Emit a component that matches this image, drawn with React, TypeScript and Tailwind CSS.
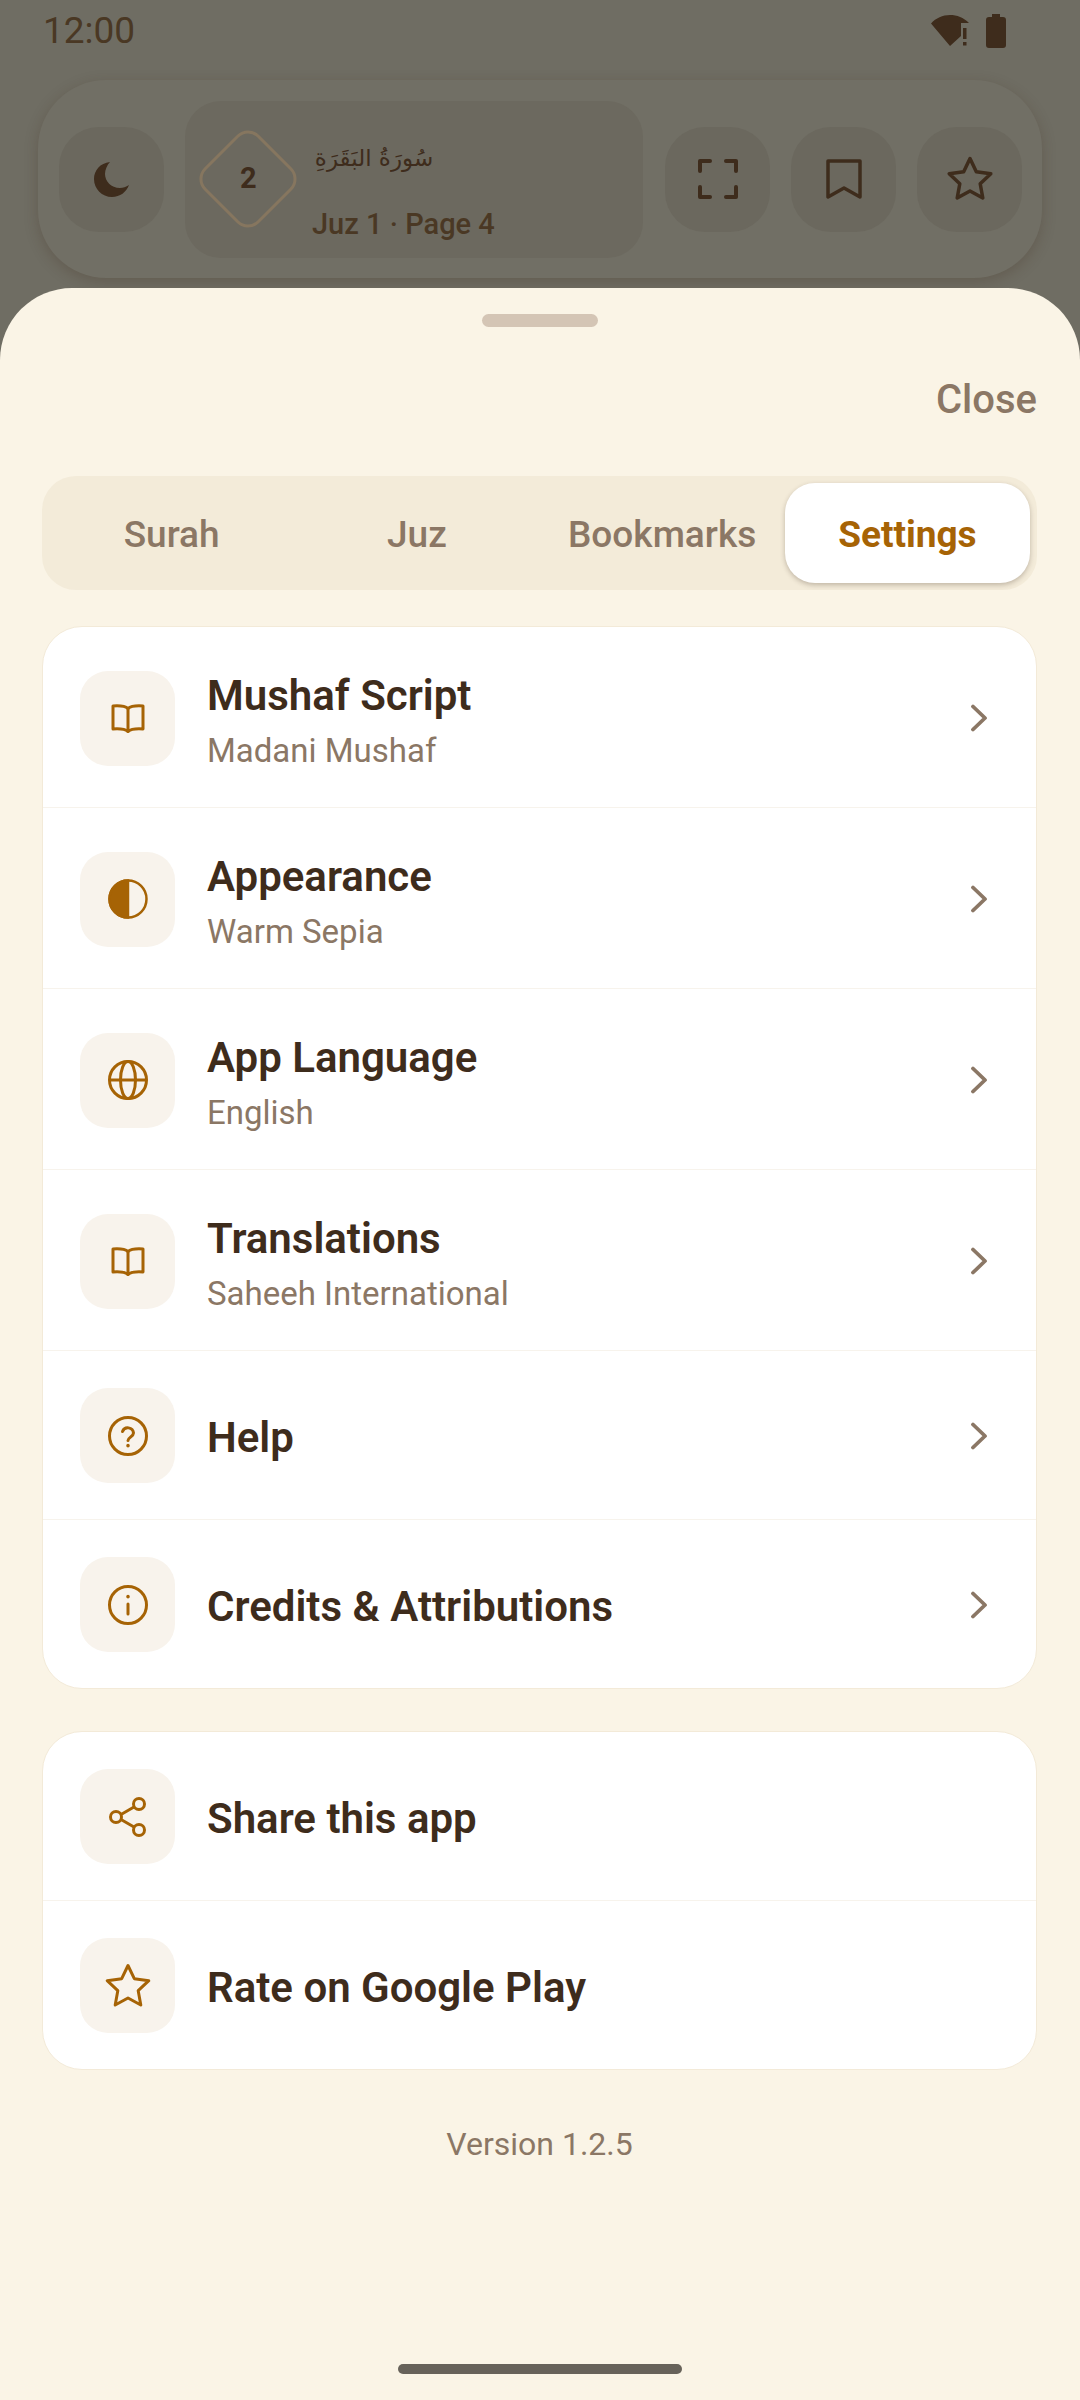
import type { ReactNode } from "react";

const BROWN = "#a66305";

function BookIcon() {
  return (
    <svg width="36" height="36" viewBox="0 0 36 36" fill="none" stroke={BROWN} strokeWidth="3" strokeLinejoin="round" strokeLinecap="round">
      <path d="M18 8.5C15 6 10 5.500 3 6v23c7-.5 12 0 15 2.500C21 29 26 28.500 33 29V6c-7-.5-12 0-15 2.500Z" />
      <path d="M18 8.500V31" />
    </svg>
  );
}

function ContrastIcon() {
  return (
    <svg width="44" height="44" viewBox="0 0 44 44" fill="none" stroke={BROWN} strokeWidth="2.500">
      <circle cx="22" cy="22" r="18.500" />
      <path d="M22 3.500a18.500 18.500 0 0 0 0 37Z" fill={BROWN} />
    </svg>
  );
}

function GlobeIcon() {
  return (
    <svg width="44" height="44" viewBox="0 0 44 44" fill="none" stroke={BROWN} strokeWidth="3">
      <circle cx="22" cy="22" r="18.500" />
      <ellipse cx="22" cy="22" rx="7.500" ry="18.500" />
      <path d="M3.500 22h37" />
    </svg>
  );
}

function HelpIcon() {
  return (
    <svg width="44" height="44" viewBox="0 0 44 44" fill="none" stroke={BROWN} strokeWidth="3" strokeLinecap="round">
      <circle cx="22" cy="22" r="18.500" />
      <path d="M16.500 17.500a5.700 5.700 0 0 1 11 1.500c0 3.700-5.500 4.500-5.500 7.500" />
      <path d="M22 31.500v.2" strokeWidth="3.500" />
    </svg>
  );
}

function InfoIcon() {
  return (
    <svg width="44" height="44" viewBox="0 0 44 44" fill="none" stroke={BROWN} strokeWidth="3" strokeLinecap="round">
      <circle cx="22" cy="22" r="18.500" />
      <path d="M22 21v10" />
      <path d="M22 13.500v.2" strokeWidth="3.500" />
    </svg>
  );
}

function ShareIcon() {
  return (
    <svg width="44" height="44" viewBox="0 0 44 44" fill="none" stroke={BROWN} strokeWidth="3">
      <circle cx="33" cy="9" r="5.500" />
      <circle cx="10" cy="22" r="5.500" />
      <circle cx="33" cy="35" r="5.500" />
      <path d="M15 19.500 28 12M15 24.500 28 32" />
    </svg>
  );
}

function StarIcon({ color, stroke }: { color: string; stroke: number }) {
  return (
    <svg width="48" height="48" viewBox="0 0 48 48" fill="none" stroke={color} strokeWidth={stroke} strokeLinejoin="round">
      <path d="m24 3.500 6.300 13.200 14.500 2-10.600 10 2.600 14.300L24 36l-12.800 7 2.600-14.300-10.600-10 14.500-2Z" />
    </svg>
  );
}

function Chevron() {
  return (
    <svg width="18" height="28" viewBox="0 0 18 28" fill="none" stroke="#8b7765" strokeWidth="3.800" strokeLinecap="round" strokeLinejoin="round">
      <path d="m3 2.500 12 11.500L3 25.500" />
    </svg>
  );
}

function ToolbarButton({ children }: { children: ReactNode }) {
  return (
    <div className="flex h-[105px] w-[105px] shrink-0 items-center justify-center rounded-[40px] bg-[#6b685e]">
      {children}
    </div>
  );
}

function Row({ icon, title, subtitle, chevron = true }: { icon: ReactNode; title: string; subtitle?: string; chevron?: boolean }) {
  return (
    <div className={`flex items-center border-b border-[#f7f3ec] pl-[37px] pr-[48px] last:border-b-0 ${subtitle ? "pt-[38px] pb-[36px]" : "pt-[37px] pb-[36px]"}`}>
      <div className="flex h-[95px] w-[95px] shrink-0 items-center justify-center rounded-[28px] bg-[#f8f3ec]">
        {icon}
      </div>
      <div className="ml-[32px] flex flex-1 flex-col">
        <div className={`text-[42px] leading-[62px] font-semibold text-[#3e2c1c] ${subtitle ? "" : "pt-[5px]"}`}>{title}</div>
        {subtitle && <div className="mt-[4px] text-[33px] leading-[40px] text-[#8b7765]">{subtitle}</div>}
      </div>
      {chevron && <Chevron />}
    </div>
  );
}

export default function App() {
  const tabs = ["Surah", "Juz", "Bookmarks"];

  return (
    <div className="flex h-[2400px] w-[1080px] flex-col overflow-hidden bg-[#6f6d63] font-['Roboto',sans-serif]">
      {/* status bar */}
      <div className="flex h-[62px] shrink-0 items-center justify-between pl-[43px] pr-[74px]">
        <span className="text-[37px] leading-[62px] text-[#4a3824]">12:00</span>
        <div className="flex items-center gap-[17px]">
          <svg width="38" height="34" viewBox="0 0 38 34" fill="#3e2c1c">
            <path d="M19 32 0 9.500C5 4 11.500 1 19 1c7 0 13.500 2.500 19 8h-8v13h0Z" />
            <path d="M32 14h3.500v11H32ZM32 28h3.500v3.500H32Z" />
          </svg>
          <svg width="20" height="34" viewBox="0 0 20 34" fill="#3e2c1c">
            <path d="M6 0h8v3h3a3 3 0 0 1 3 3v25a3 3 0 0 1-3 3H3a3 3 0 0 1-3-3V6a3 3 0 0 1 3-3h3Z" />
          </svg>
        </div>
      </div>

      {/* reader toolbar, dimmed behind the sheet */}
      <div className="mx-[38px] mt-[18px] flex h-[198px] shrink-0 items-center rounded-[68px] bg-[#716f65] pl-[21px] pr-[20px] shadow-[0_4px_14px_rgba(62,44,28,0.25)]">
        <ToolbarButton>
          <svg width="40" height="40" viewBox="0 0 40 40" fill="#3e2c1c">
            <path d="M18 3C8 4 2 11.500 2 20c0 10 8 18 18 18 8 0 14.500-5 17-12-3 2-6 3-9 3-9 0-15-7-15-14 0-4 2-9 5-12Z" />
          </svg>
        </ToolbarButton>

        <div className="ml-[21px] flex h-[157px] w-[458px] items-center rounded-[36px] bg-[#6c695f] pl-[14px]">
          <div className="flex h-[98px] w-[98px] shrink-0 items-center justify-center">
            <div className="flex h-[78px] w-[78px] shrink-0 rotate-45 items-center justify-center rounded-[16px] border-[3px] border-[#86765f]">
              <span className="-rotate-45 text-[29px] font-bold text-[#3e2c1c]">2</span>
            </div>
          </div>
          <div className="ml-[15px] flex flex-col pt-[13px]">
            <div dir="rtl" className="w-[124px] whitespace-nowrap text-center font-['DejaVu_Sans',serif] text-[23px] leading-[56px] text-[#3e2c1c]">
              سُورَةُ البَقَرَةِ
            </div>
            <div className="mt-[20px] text-[29px] leading-[36px] font-medium text-[#4a3824]">Juz 1 · Page 4</div>
          </div>
        </div>

        <div className="ml-[22px] flex gap-[21px]">
          <ToolbarButton>
            <svg width="40" height="40" viewBox="0 0 40 40" fill="none" stroke="#3e2c1c" strokeWidth="4" strokeLinejoin="round" strokeLinecap="round">
              <path d="M12 2H2v10M28 2h10v10M2 28v10h10M38 28v10H28" />
            </svg>
          </ToolbarButton>
          <ToolbarButton>
            <svg width="36" height="40" viewBox="0 0 36 40" fill="none" stroke="#3e2c1c" strokeWidth="3.500" strokeLinejoin="round">
              <path d="M2 2h32v36L18 29 2 38Z" />
            </svg>
          </ToolbarButton>
          <ToolbarButton>
            <StarIcon color="#3e2c1c" stroke={3.500} />
          </ToolbarButton>
        </div>
      </div>

      {/* bottom sheet */}
      <div className="mt-[10px] flex flex-1 flex-col rounded-t-[72px] bg-[#faf4e6] pl-[42px] pr-[43px]">
        <div className="mt-[26px] h-[13px] w-[116px] self-center rounded-full bg-[#d4c5b5]" />
        <div className="mt-[51px] self-end text-[40px] leading-[44px] font-medium text-[#8b7765]">Close</div>

        <div className="mt-[54px] grid h-[114px] grid-cols-4 items-center rounded-[34px] bg-[#f3ebd9] p-[7px]">
          {tabs.map((tab) => (
            <div key={tab} className="pt-[3px] text-center text-[37px] font-medium text-[#8b7765]">
              {tab}
            </div>
          ))}
          <div className="flex h-[100px] items-center justify-center rounded-[30px] bg-white pt-[3px] text-[37px] font-bold text-[#a66305] shadow-[0_2px_5px_rgba(62,44,28,0.28)]">
            Settings
          </div>
        </div>

        <div className="mt-[36px] overflow-hidden rounded-[40px] border border-[#f3ead8] bg-white">
          <Row icon={<BookIcon />} title="Mushaf Script" subtitle="Madani Mushaf" />
          <Row icon={<ContrastIcon />} title="Appearance" subtitle="Warm Sepia" />
          <Row icon={<GlobeIcon />} title="App Language" subtitle="English" />
          <Row icon={<BookIcon />} title="Translations" subtitle="Saheeh International" />
          <Row icon={<HelpIcon />} title="Help" />
          <Row icon={<InfoIcon />} title="Credits & Attributions" />
        </div>

        <div className="mt-[42px] overflow-hidden rounded-[40px] border border-[#f3ead8] bg-white">
          <Row icon={<ShareIcon />} title="Share this app" chevron={false} />
          <Row icon={<StarIcon color={BROWN} stroke={3} />} title="Rate on Google Play" chevron={false} />
        </div>

        <div className="mt-[52px] text-center text-[32px] leading-[44px] text-[#8b7765]">Version 1.2.5</div>

        <div className="mt-auto mb-[26px] h-[10px] w-[284px] self-center rounded-full bg-[#67625a]" />
      </div>
    </div>
  );
}
